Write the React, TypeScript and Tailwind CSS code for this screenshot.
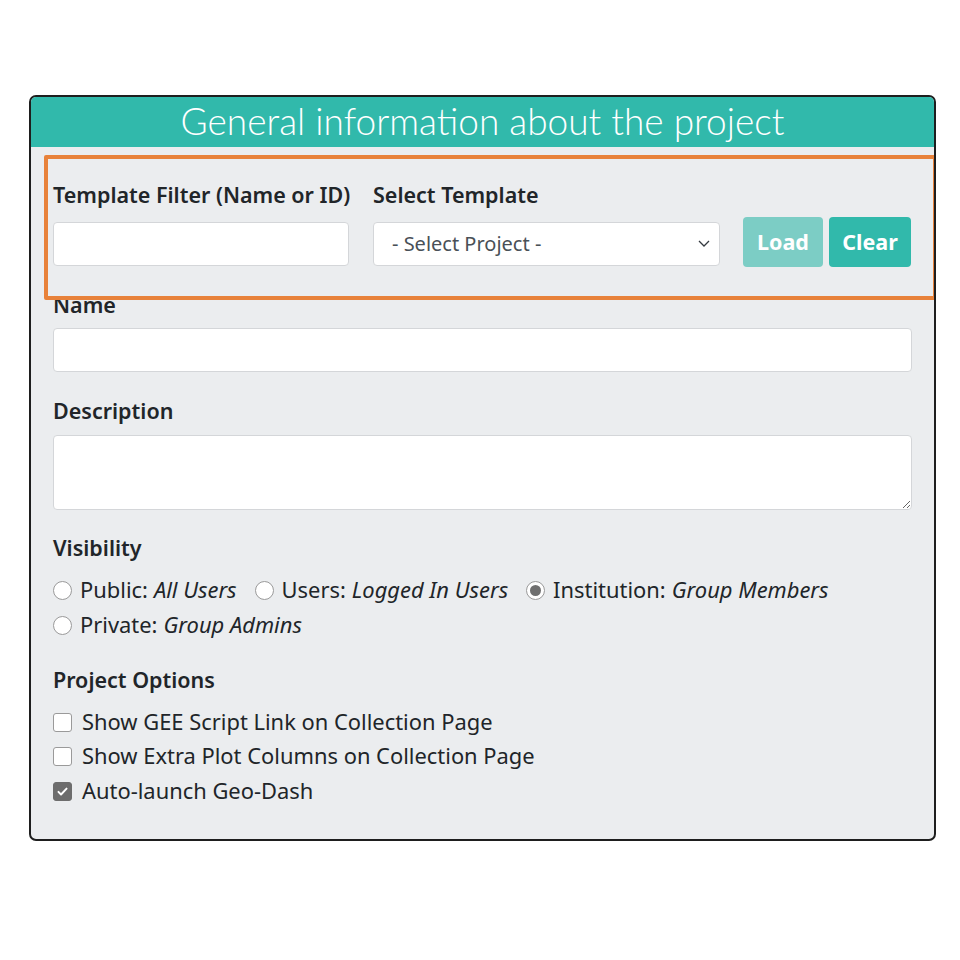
import { useState } from "react"

const font = { fontFamily: '"Noto Sans", "Open Sans", sans-serif' }

function Radio(props: { checked?: boolean; label: string; detail: string }) {
  return (
    <label className="flex items-center mr-[18px] h-[35px] whitespace-nowrap text-[21.9px]">
      <span className="w-[19px] h-[19px] rounded-full border border-[#9a9a9a] bg-white flex items-center justify-center mr-[8px]">
        {props.checked && <span className="w-[11px] h-[11px] rounded-full bg-[#6f6f6f]" />}
      </span>
      <span>{props.label}:</span>
      <span className="italic ml-[6px]">{props.detail}</span>
    </label>
  )
}

function Check(props: { checked?: boolean; label: string }) {
  return (
    <label className="flex items-center h-[34.5px] whitespace-nowrap text-[21.9px]">
      <span
        className={`w-[19px] h-[19px] rounded-[3px] border flex items-center justify-center mr-[10px] ${
          props.checked ? "bg-[#6d6d6d] border-[#6d6d6d]" : "bg-white border-[#9a9a9a]"
        }`}
      >
        {props.checked && (
          <svg width="13" height="13" viewBox="0 0 16 16">
            <path d="M3 8.5l3.2 3.2L13 4.5" stroke="white" strokeWidth="2.4" fill="none" strokeLinecap="round" strokeLinejoin="round" />
          </svg>
        )}
      </span>
      <span>{props.label}</span>
    </label>
  )
}

export default function App() {
  const [tpl, setTpl] = useState("")
  return (
    <div className="w-[960px] h-[960px] bg-white pt-[95px] pl-[29px]" style={font}>
      <div className="relative w-[907px] rounded-[7px] border-2 border-[#1e1e1e] bg-[#ebedef] text-[#212529] text-[21.5px] overflow-hidden">
        <div className="h-[50px] bg-[#31b9ab] flex items-center justify-center">
          <span
            className="text-white text-[37px] leading-none -mt-[4px]"
            style={{ fontFamily: '"Lato", "Roboto", sans-serif', fontWeight: 300 }}
          >
            General information about the project
          </span>
        </div>

        <div className="px-[22px] pt-[33px] pb-[30px]">
          <div className="flex items-end">
            <div className="w-[296px] mr-[24px]">
              <div className="font-semibold h-[30px] leading-[30px] mb-[12px] whitespace-nowrap">Template Filter (Name or ID)</div>
              <input
                value={tpl}
                onChange={(e) => setTpl(e.target.value)}
                className="w-full h-[44px] bg-white border border-[#d4d6d9] rounded-[4px] outline-none px-3"
              />
            </div>
            <div className="w-[347px] mr-[23px]">
              <div className="font-semibold h-[30px] leading-[30px] mb-[12px]">Select Template</div>
              <div className="relative">
                <select className="appearance-none w-full h-[44px] bg-white border border-[#d4d6d9] rounded-[4px] outline-none pl-[18px] text-[#495057] text-[20px]">
                  <option>- Select Project -</option>
                </select>
                <svg className="absolute right-[9px] top-[16px] pointer-events-none" width="14" height="10" viewBox="0 0 14 10">
                  <path d="M2 3l5 5 5-5" stroke="#343a40" strokeWidth="1.3" fill="none" />
                </svg>
              </div>
            </div>
            <button className="w-[80px] h-[50px] rounded-[4px] bg-[#7ccdc5] text-white font-bold mr-[6px] -mb-[1px]">Load</button>
            <button className="w-[82px] h-[50px] rounded-[4px] bg-[#31b9ab] text-white font-bold -mb-[1px]">Clear</button>
          </div>

          <div className="font-semibold h-[30px] leading-[30px] mt-[24px] mb-[8px]">Name</div>
          <input className="w-full h-[44px] bg-white border border-[#d4d6d9] rounded-[4px] outline-none px-3 block" />

          <div className="font-semibold h-[30px] leading-[30px] mt-[24px] mb-[9px]">Description</div>
          <textarea className="w-full h-[75px] bg-white border border-[#d4d6d9] rounded-[4px] outline-none px-3 block" />

          <div className="font-semibold h-[30px] leading-[30px] mt-[23px] mb-[10px]">Visibility</div>
          <div className="flex flex-wrap w-[810px]">
            <Radio label="Public" detail="All Users" />
            <Radio label="Users" detail="Logged In Users" />
            <Radio checked label="Institution" detail="Group Members" />
            <Radio label="Private" detail="Group Admins" />
          </div>

          <div className="font-semibold h-[30px] leading-[30px] mt-[22px] mb-[10px]">Project Options</div>
          <Check label="Show GEE Script Link on Collection Page" />
          <Check label="Show Extra Plot Columns on Collection Page" />
          <Check checked label="Auto-launch Geo-Dash" />
        </div>

        <div className="absolute left-[13px] top-[58px] w-[893px] h-[145px] border-[4px] border-[#e8823a] rounded-[2px] pointer-events-none" />
      </div>
    </div>
  )
}
